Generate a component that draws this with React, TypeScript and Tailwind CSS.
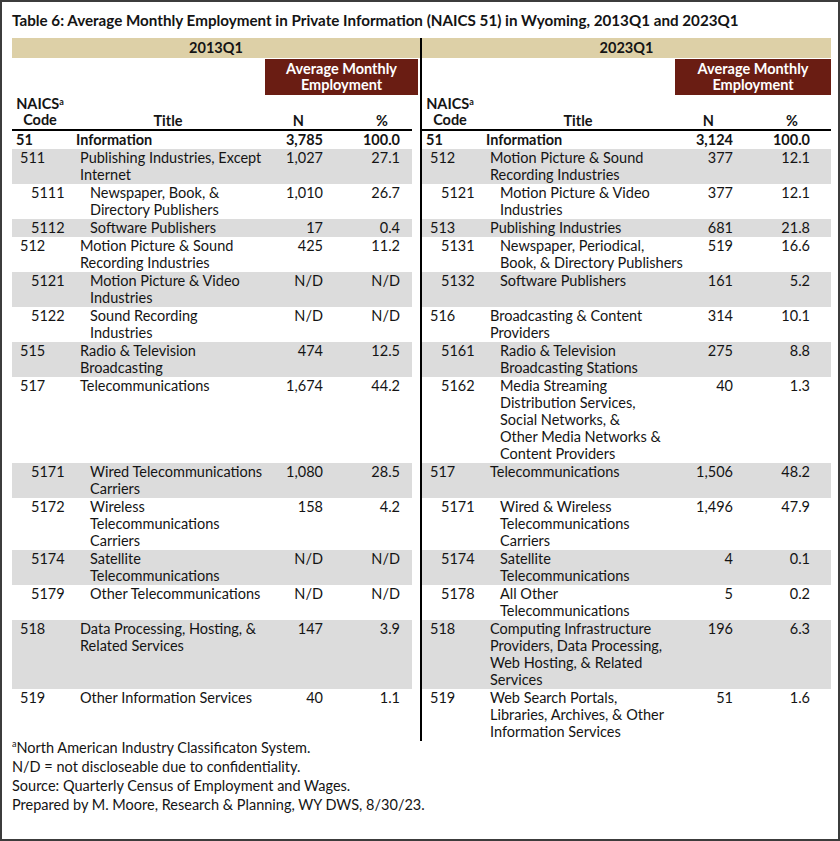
import React from "react";

type Row = { code: string; lines: string[]; n: string; pct: string; lvl: 0 | 1 | 2 };

const L = (code: string, lines: string[], n: string, pct: string, lvl: 0 | 1 | 2): Row => ({ code, lines, n, pct, lvl });

// each entry: [2013Q1 row, 2023Q1 row] — rows line up across both halves
const rows: [Row, Row][] = [
    [L("51", ["Information"], "3,785", "100.0", 0), L("51", ["Information"], "3,124", "100.0", 0)],
    [
        L("511", ["Publishing Industries, Except", "Internet"], "1,027", "27.1", 1),
        L("512", ["Motion Picture & Sound", "Recording Industries"], "377", "12.1", 1),
    ],
    [
        L("5111", ["Newspaper, Book, &", "Directory Publishers"], "1,010", "26.7", 2),
        L("5121", ["Motion Picture & Video", "Industries"], "377", "12.1", 2),
    ],
    [L("5112", ["Software Publishers"], "17", "0.4", 2), L("513", ["Publishing Industries"], "681", "21.8", 1)],
    [
        L("512", ["Motion Picture & Sound", "Recording Industries"], "425", "11.2", 1),
        L("5131", ["Newspaper, Periodical,", "Book, & Directory Publishers"], "519", "16.6", 2),
    ],
    [
        L("5121", ["Motion Picture & Video", "Industries"], "N/D", "N/D", 2),
        L("5132", ["Software Publishers"], "161", "5.2", 2),
    ],
    [
        L("5122", ["Sound Recording", "Industries"], "N/D", "N/D", 2),
        L("516", ["Broadcasting & Content", "Providers"], "314", "10.1", 1),
    ],
    [
        L("515", ["Radio & Television", "Broadcasting"], "474", "12.5", 1),
        L("5161", ["Radio & Television", "Broadcasting Stations"], "275", "8.8", 2),
    ],
    [
        L("517", ["Telecommunications"], "1,674", "44.2", 1),
        L(
            "5162",
            ["Media Streaming", "Distribution Services,", "Social Networks, &", "Other Media Networks &", "Content Providers"],
            "40",
            "1.3",
            2
        ),
    ],
    [
        L("5171", ["Wired Telecommunications", "Carriers"], "1,080", "28.5", 2),
        L("517", ["Telecommunications"], "1,506", "48.2", 1),
    ],
    [
        L("5172", ["Wireless", "Telecommunications", "Carriers"], "158", "4.2", 2),
        L("5171", ["Wired & Wireless", "Telecommunications", "Carriers"], "1,496", "47.9", 2),
    ],
    [
        L("5174", ["Satellite", "Telecommunications"], "N/D", "N/D", 2),
        L("5174", ["Satellite", "Telecommunications"], "4", "0.1", 2),
    ],
    [
        L("5179", ["Other Telecommunications"], "N/D", "N/D", 2),
        L("5178", ["All Other", "Telecommunications"], "5", "0.2", 2),
    ],
    [
        L("518", ["Data Processing, Hosting, &", "Related Services"], "147", "3.9", 1),
        L("518", ["Computing Infrastructure", "Providers, Data Processing,", "Web Hosting, & Related", "Services"], "196", "6.3", 1),
    ],
    [
        L("519", ["Other Information Services"], "40", "1.1", 1),
        L("519", ["Web Search Portals,", "Libraries, Archives, & Other", "Information Services"], "51", "1.6", 1),
    ],
];

const codePad = ["pl-[4px]", "pl-[8px]", "pl-[19px]"];
const titlePad = ["pl-0", "pl-[4px]", "pl-[14px]"];

const Cells = ({ r, bold }: { r: Row; bold: boolean }) => (
    <div className={`flex flex-1 pb-px ${bold ? "font-bold" : ""}`}>
        <div className={`w-[64px] shrink-0 ${codePad[r.lvl]}`}>{r.code}</div>
        <div className={`w-[194px] shrink-0 whitespace-nowrap ${titlePad[r.lvl]}`}>
            {r.lines.map((l) => (
                <div key={l}>{l}</div>
            ))}
        </div>
        <div className="w-[53px] shrink-0 text-right">{r.n}</div>
        <div className="w-[77px] shrink-0 text-right">{r.pct}</div>
    </div>
);

const Maroon = ({ w }: { w: string }) => (
    <div className={`ml-[253px] ${w} h-[36px] mt-px bg-[#6a1d13] text-white font-bold text-center leading-[16px] flex flex-col justify-center`}>
        <span>Average Monthly</span>
        <span>Employment</span>
    </div>
);

const HeadText = () => (
    <div className="flex items-end h-[36px] border-b-2 border-black font-bold">
        <div className="w-[56px] text-center leading-[16px] pb-px">
            <div>
                NAICS<span className="align-top text-[9px] leading-[12px]">a</span>
            </div>
            <div>Code</div>
        </div>
        <div className="ml-[8px] w-[184px] text-center">Title</div>
        <div className="w-[44px] text-right">N</div>
        <div className="w-[84px] text-right">%</div>
    </div>
);

export default function App() {
    return (
        <div className="w-[840px] h-[841px] border-2 border-[#3c3c3c] bg-white pl-[10px] text-[#141414] text-[14.5px] leading-[17px] font-['Lato','Liberation_Sans',sans-serif]">
            <div className="h-[36px] pt-[10px] font-bold text-[15.2px] whitespace-nowrap">
                Table 6: Average Monthly Employment in Private Information (NAICS 51) in Wyoming, 2013Q1 and 2023Q1
            </div>

            {/* year bands */}
            <div className="flex h-[20px] font-bold leading-[20px] text-center">
                <div className="w-[410px] border-r-2 border-black">
                    <div className="bg-[#ddd0a7] h-full">2013Q1</div>
                </div>
                <div className="w-[409px] bg-[#ddd0a7]">2023Q1</div>
            </div>

            {/* column heads */}
            <div className="flex">
                <div className="w-[410px] border-r-2 border-black">
                    <Maroon w="w-[153px]" />
                    <div className="w-[400px]">
                        <HeadText />
                    </div>
                </div>
                <div className="w-[409px]">
                    <Maroon w="w-[156px]" />
                    <HeadText />
                </div>
            </div>

            {rows.map(([a, b], i) => {
                const shade = i % 2 === 1 ? "bg-[#dcdcdc]" : "";
                return (
                    <div key={i} className="flex">
                        <div className="flex w-[410px] border-r-2 border-black pr-2">
                            <div className={`flex flex-1 ${shade}`}>
                                <Cells r={a} bold={i === 0} />
                            </div>
                        </div>
                        <div className={`flex w-[409px] ${shade}`}>
                            <Cells r={b} bold={i === 0} />
                        </div>
                    </div>
                );
            })}

            <div className="leading-[19px] mt-[-3px]">
                <div>
                    <span className="align-top text-[9px] leading-[12px]">a</span>North American Industry Classificaton System.
                </div>
                <div>N/D = not discloseable due to confidentiality.</div>
                <div>Source: Quarterly Census of Employment and Wages.</div>
                <div>Prepared by M. Moore, Research &amp; Planning, WY DWS, 8/30/23.</div>
            </div>
        </div>
    );
}
